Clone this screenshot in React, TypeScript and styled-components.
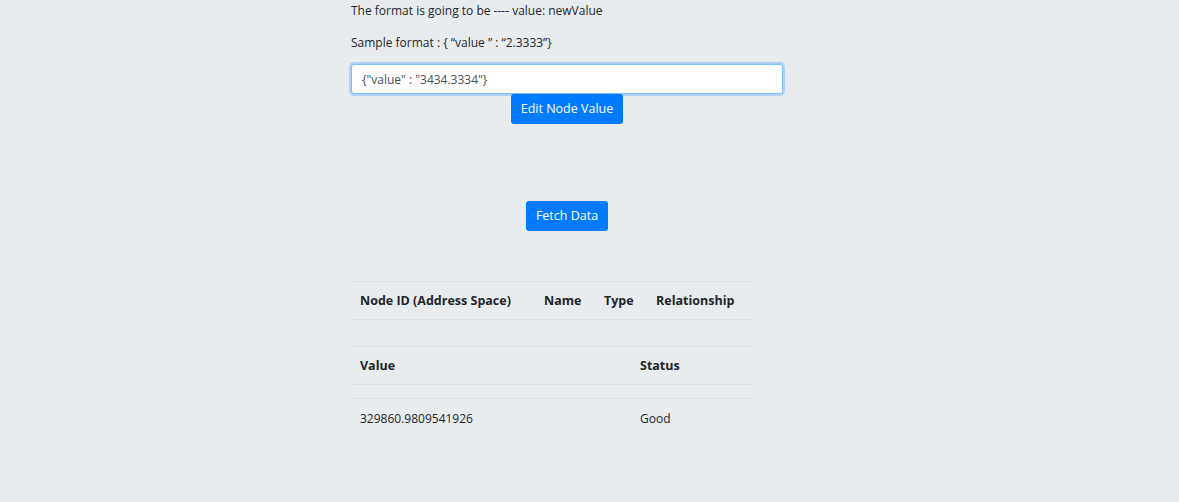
import React from "react";
import styled, { createGlobalStyle } from "styled-components";

const Global = createGlobalStyle`
  html, body { margin: 0; padding: 0; }
  body {
    background: #e9ecef;
    font-family: "Open Sans", "Noto Sans", sans-serif;
    font-size: 12px;
    color: #212529;
  }
`;

const Page = styled.div`
  width: 1179px;
  height: 502px;
  overflow: hidden;
`;

const Column = styled.div`
  margin-left: 351px;
  width: 432px;
  display: flex;
  flex-direction: column;
`;

const Para = styled.p<{ $top: number }>`
  margin: ${(p) => p.$top}px 0 0 0;
  line-height: 20px;
  white-space: nowrap;
`;

const Input = styled.input`
  box-sizing: border-box;
  margin-top: 11px;
  width: 432px;
  height: 30px;
  padding: 0 10px;
  font-family: inherit;
  font-size: 12px;
  color: #495057;
  background: #fff;
  border: 1px solid #80bdff;
  border-radius: 3px;
  box-shadow: 0 0 0 2px rgba(0, 123, 255, 0.25);
  outline: none;
`;

const Center = styled.div<{ $top: number }>`
  display: flex;
  justify-content: center;
  margin-top: ${(p) => p.$top}px;
`;

const Button = styled.button`
  font-family: inherit;
  font-size: 12.5px;
  color: #fff;
  background: #007bff;
  border: none;
  border-radius: 3px;
  height: 30px;
  padding: 0 10px;
  line-height: 30px;
`;

const Table = styled.table<{ $top: number }>`
  margin-top: ${(p) => p.$top}px;
  width: 401px;
  border-collapse: collapse;
  table-layout: fixed;
`;

const Th = styled.th`
  text-align: left;
  font-weight: 700;
  font-size: 12.5px;
  padding: 0 9px;
  height: 37px;
  border-top: 1px solid #dee2e6;
  border-bottom: 1px solid #dee2e6;
  white-space: nowrap;
`;

const Td = styled.td<{ $h: number }>`
  padding: 0 9px;
  height: ${(p) => p.$h}px;
  border-top: 1px solid #dee2e6;
  white-space: nowrap;
`;

export default function App() {
  return (
    <Page>
      <Global />
      <Column>
        <Para $top={1}>The format is going to be ---- value: newValue</Para>
        <Para $top={12}>Sample format : {"{ \u201cvalue \u201d : \u201c2.3333\u201d}"}</Para>
        <Input defaultValue={'{"value" : "3434.3334"}'} />
        <Center $top={0}>
          <Button>Edit Node Value</Button>
        </Center>
        <Center $top={77}>
          <Button>Fetch Data</Button>
        </Center>
        <Table $top={50}>
          <colgroup>
            <col style={{ width: 184 }} />
            <col style={{ width: 60 }} />
            <col style={{ width: 52 }} />
            <col style={{ width: 105 }} />
          </colgroup>
          <thead>
            <tr>
              <Th>Node ID (Address Space)</Th>
              <Th>Name</Th>
              <Th>Type</Th>
              <Th>Relationship</Th>
            </tr>
          </thead>
        </Table>
        <Table $top={26}>
          <colgroup>
            <col style={{ width: 280 }} />
            <col style={{ width: 121 }} />
          </colgroup>
          <thead>
            <tr>
              <Th>Value</Th>
              <Th>Status</Th>
            </tr>
          </thead>
          <tbody>
            <tr>
              <Td $h={13}></Td>
              <Td $h={13}></Td>
            </tr>
            <tr>
              <Td $h={38}>329860.9809541926</Td>
              <Td $h={38}>Good</Td>
            </tr>
          </tbody>
        </Table>
      </Column>
    </Page>
  );
}
